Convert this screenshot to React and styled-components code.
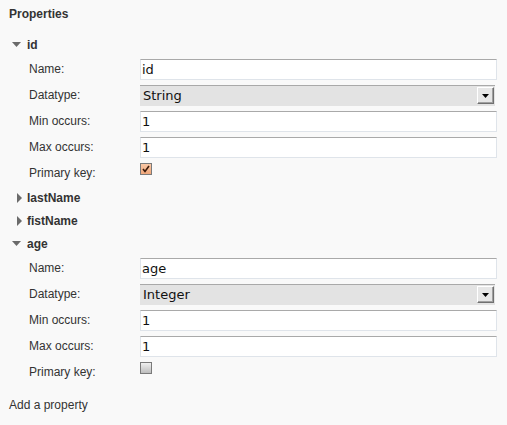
import React from "react";
import styled, { createGlobalStyle } from "styled-components";

const Global = createGlobalStyle`
  html, body { margin: 0; padding: 0; background: #f9f9f9; }
  body { font-family: "Liberation Sans", Arial, sans-serif; font-size: 12px; color: #333; }
`;

const Panel = styled.div`
  width: 507px;
  height: 425px;
  box-sizing: border-box;
  padding: 6px 10px 0 9px;
  display: flex;
  flex-direction: column;
  background: #f9f9f9;
`;

const Title = styled.div`
  font-weight: bold;
  line-height: 16px;
  margin-bottom: 11px;
  color: #333;
`;

const Header = styled.div`
  height: 23px;
  display: flex;
  align-items: center;
  padding-left: 3px;
  font-weight: bold;
  color: #333;
`;

const Toggle = styled.span`
  width: 15px;
  display: flex;
  align-items: center;
  justify-content: ${(p) => (p.$open ? "flex-start" : "center")};
  svg { display: block; }
`;

const Fields = styled.div`
  display: flex;
  flex-direction: column;
`;

const Row = styled.div`
  height: 26px;
  display: flex;
  align-items: center;
`;

const Label = styled.span`
  width: 131px;
  padding-left: 20px;
  box-sizing: border-box;
  color: #333;
  flex: none;
`;

const Input = styled.div`
  width: 357px;
  height: 21px;
  box-sizing: border-box;
  background: #fff;
  border: 1px solid #dfe4ea;
  border-top-color: #a9a9a9;
  padding-left: 1px;
  font-family: "DejaVu Sans", sans-serif;
  font-size: 13px;
  line-height: 19px;
  color: #111;
`;

const Select = styled.div`
  width: 355px;
  height: 21px;
  box-sizing: border-box;
  background: #e3e3e3;
  border-top: 1px solid #a9a9a9;
  display: flex;
  align-items: center;
  justify-content: space-between;
  padding: 0 1px 0 3px;
  font-family: "DejaVu Sans", sans-serif;
  font-size: 13px;
  color: #111;
`;

const DropButton = styled.span`
  width: 17px;
  height: 17px;
  box-sizing: border-box;
  background: #e6e6e6;
  border: 1px solid;
  border-color: #fff #707070 #707070 #fff;
  box-shadow: inset -1px -1px 0 #a0a0a0;
  display: flex;
  align-items: center;
  justify-content: center;
`;

const Check = styled.span`
  width: 12px;
  height: 12px;
  box-sizing: border-box;
  border: 1px solid #7a7a7a;
  margin-top: -8px;
  display: flex;
  align-items: center;
  justify-content: center;
  background: ${(p) =>
    p.$checked
      ? "linear-gradient(#f9c8a6, #f0a77a)"
      : "linear-gradient(#f0f0f0, #bdbdbd)"};
  svg { display: block; }
`;

const AddLink = styled.div`
  margin-top: 12px;
  line-height: 16px;
  color: #333;
`;

const DownArrow = () => (
  <svg width="9" height="5" viewBox="0 0 9 5">
    <polygon points="0,0 9,0 4.5,5" fill="#6b6b6b" />
  </svg>
);

const RightArrow = () => (
  <svg width="5" height="10" viewBox="0 0 5 10">
    <polygon points="0,0 5,5 0,10" fill="#6b6b6b" />
  </svg>
);

function Field({ label, children }) {
  return (
    <Row>
      <Label>{label}</Label>
      {children}
    </Row>
  );
}

function Property({ name, open, type, primary }) {
  return (
    <>
      <Header>
        <Toggle $open={open}>{open ? <DownArrow /> : <RightArrow />}</Toggle>
        {name}
      </Header>
      {open && (
        <Fields>
          <Field label="Name:">
            <Input>{name}</Input>
          </Field>
          <Field label="Datatype:">
            <Select>
              <span>{type}</span>
              <DropButton>
                <svg width="7" height="4" viewBox="0 0 7 4">
                  <polygon points="0,0 7,0 3.5,4" fill="#000" />
                </svg>
              </DropButton>
            </Select>
          </Field>
          <Field label="Min occurs:">
            <Input>1</Input>
          </Field>
          <Field label="Max occurs:">
            <Input>1</Input>
          </Field>
          <Field label="Primary key:">
            <Check $checked={primary}>
              {primary && (
                <svg width="8" height="8" viewBox="0 0 8 8">
                  <path d="M1 4 L3 6.5 L7 1" stroke="#3a1a0a" strokeWidth="1.6" fill="none" />
                </svg>
              )}
            </Check>
          </Field>
        </Fields>
      )}
    </>
  );
}

export default function App() {
  return (
    <>
      <Global />
      <Panel>
        <Title>Properties</Title>
        <Property name="id" open type="String" primary />
        <Property name="lastName" />
        <Property name="fistName" />
        <Property name="age" open type="Integer" />
        <AddLink>Add a property</AddLink>
      </Panel>
    </>
  );
}
